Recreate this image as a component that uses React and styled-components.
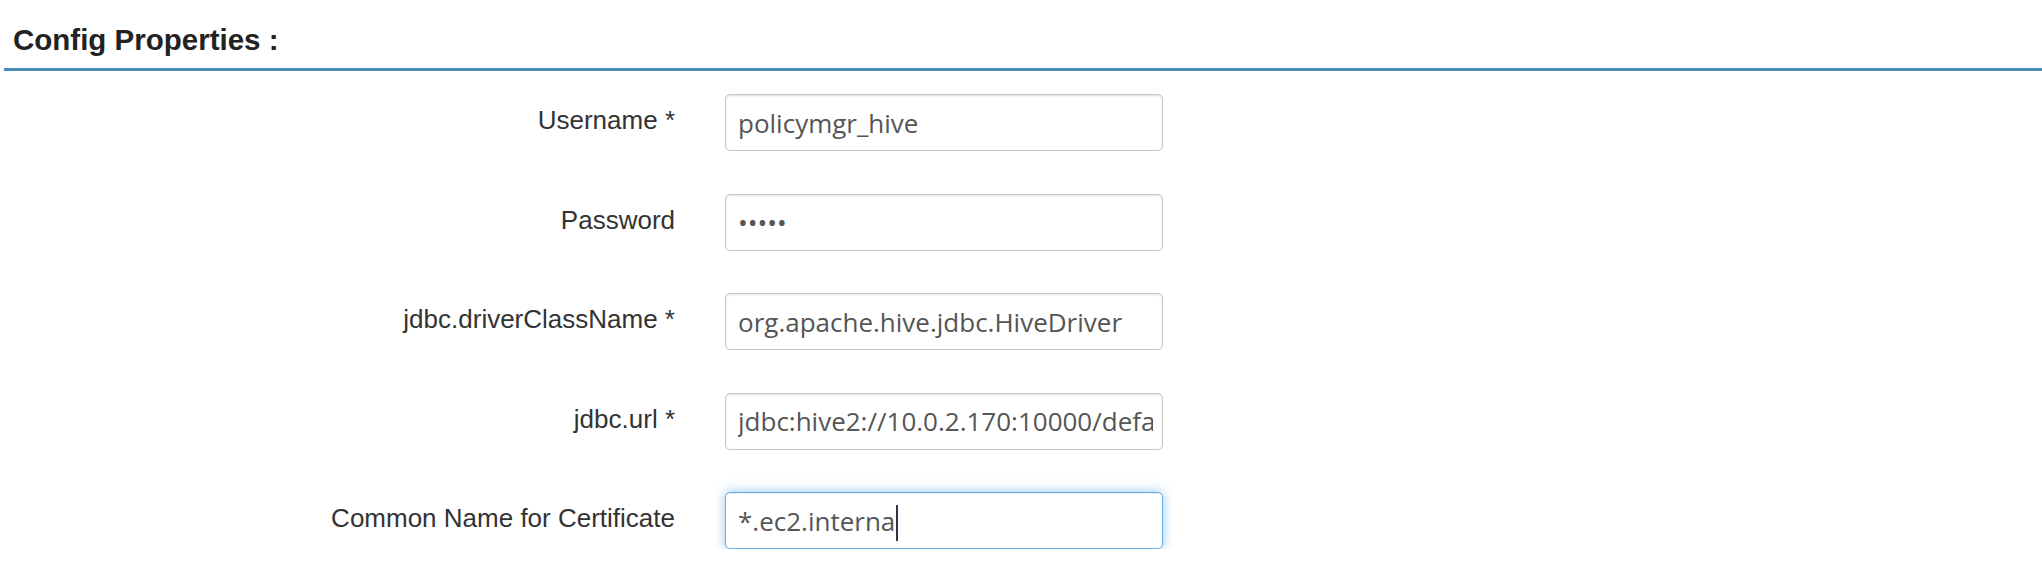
import React from 'react'
import styled, { createGlobalStyle } from 'styled-components'

const GlobalStyle = createGlobalStyle`
  body {
    margin: 0;
    background: #fff;
    font-family: "Liberation Sans", Arial, sans-serif;
  }
`

const Section = styled.section`
  margin-left: 4px;
`

const Title = styled.h3`
  margin: 0;
  padding: 22px 0 10px 9px;
  font-size: 29.5px;
  line-height: 36px;
  font-weight: 700;
  color: #222;
  border-bottom: 3px solid #4b8bb9;
`

const Form = styled.div`
  display: grid;
  grid-template-columns: 671px 438px;
  grid-auto-rows: 57px;
  column-gap: 50px;
  row-gap: 42.5px;
  margin-top: 23px;
`

const Label = styled.label`
  align-self: center;
  text-align: right;
  padding-bottom: 4px;
  font-size: 26px;
  color: #333;
`

const Field = styled.div`
  display: flex;
  align-items: center;
  box-sizing: border-box;
  height: 100%;
  padding: 0 9px 0 12px;
  border: 1px solid ${p => (p.$focused ? '#66afe9' : '#c6c6c6')};
  border-radius: 5px;
  background: #fff;
  box-shadow: ${p =>
    p.$focused
      ? 'inset 0 1px 1px rgba(0,0,0,.075), 0 0 12px rgba(102,175,233,.7)'
      : 'inset 0 1px 2px rgba(0,0,0,.12)'};
  font-family: "Open Sans", "Noto Sans", sans-serif;
  font-size: 26px;
  color: #555;
`

const Value = styled.span`
  display: flex;
  align-items: center;
  min-width: 0;
  flex: 1;
  white-space: nowrap;
  overflow: hidden;
`

const Caret = styled.span`
  display: inline-block;
  flex: none;
  width: 2px;
  height: 36px;
  margin: 4px 0 0 1px;
  background: #3a2f44;
`

const fields = [
  { label: 'Username *', value: 'policymgr_hive' },
  { label: 'Password', value: '•••••' },
  { label: 'jdbc.driverClassName *', value: 'org.apache.hive.jdbc.HiveDriver' },
  { label: 'jdbc.url *', value: 'jdbc:hive2://10.0.2.170:10000/default' },
  { label: 'Common Name for Certificate', value: '*.ec2.interna', focused: true },
]

const App = () => {
  return (
    <Section>
      <GlobalStyle />
      <Title>Config Properties :</Title>
      <Form>
        {fields.map(f => (
          <React.Fragment key={f.label}>
            <Label>{f.label}</Label>
            <Field $focused={f.focused}>
              <Value>
                {f.value}
                {f.focused && <Caret />}
              </Value>
            </Field>
          </React.Fragment>
        ))}
      </Form>
    </Section>
  )
}

export default App
